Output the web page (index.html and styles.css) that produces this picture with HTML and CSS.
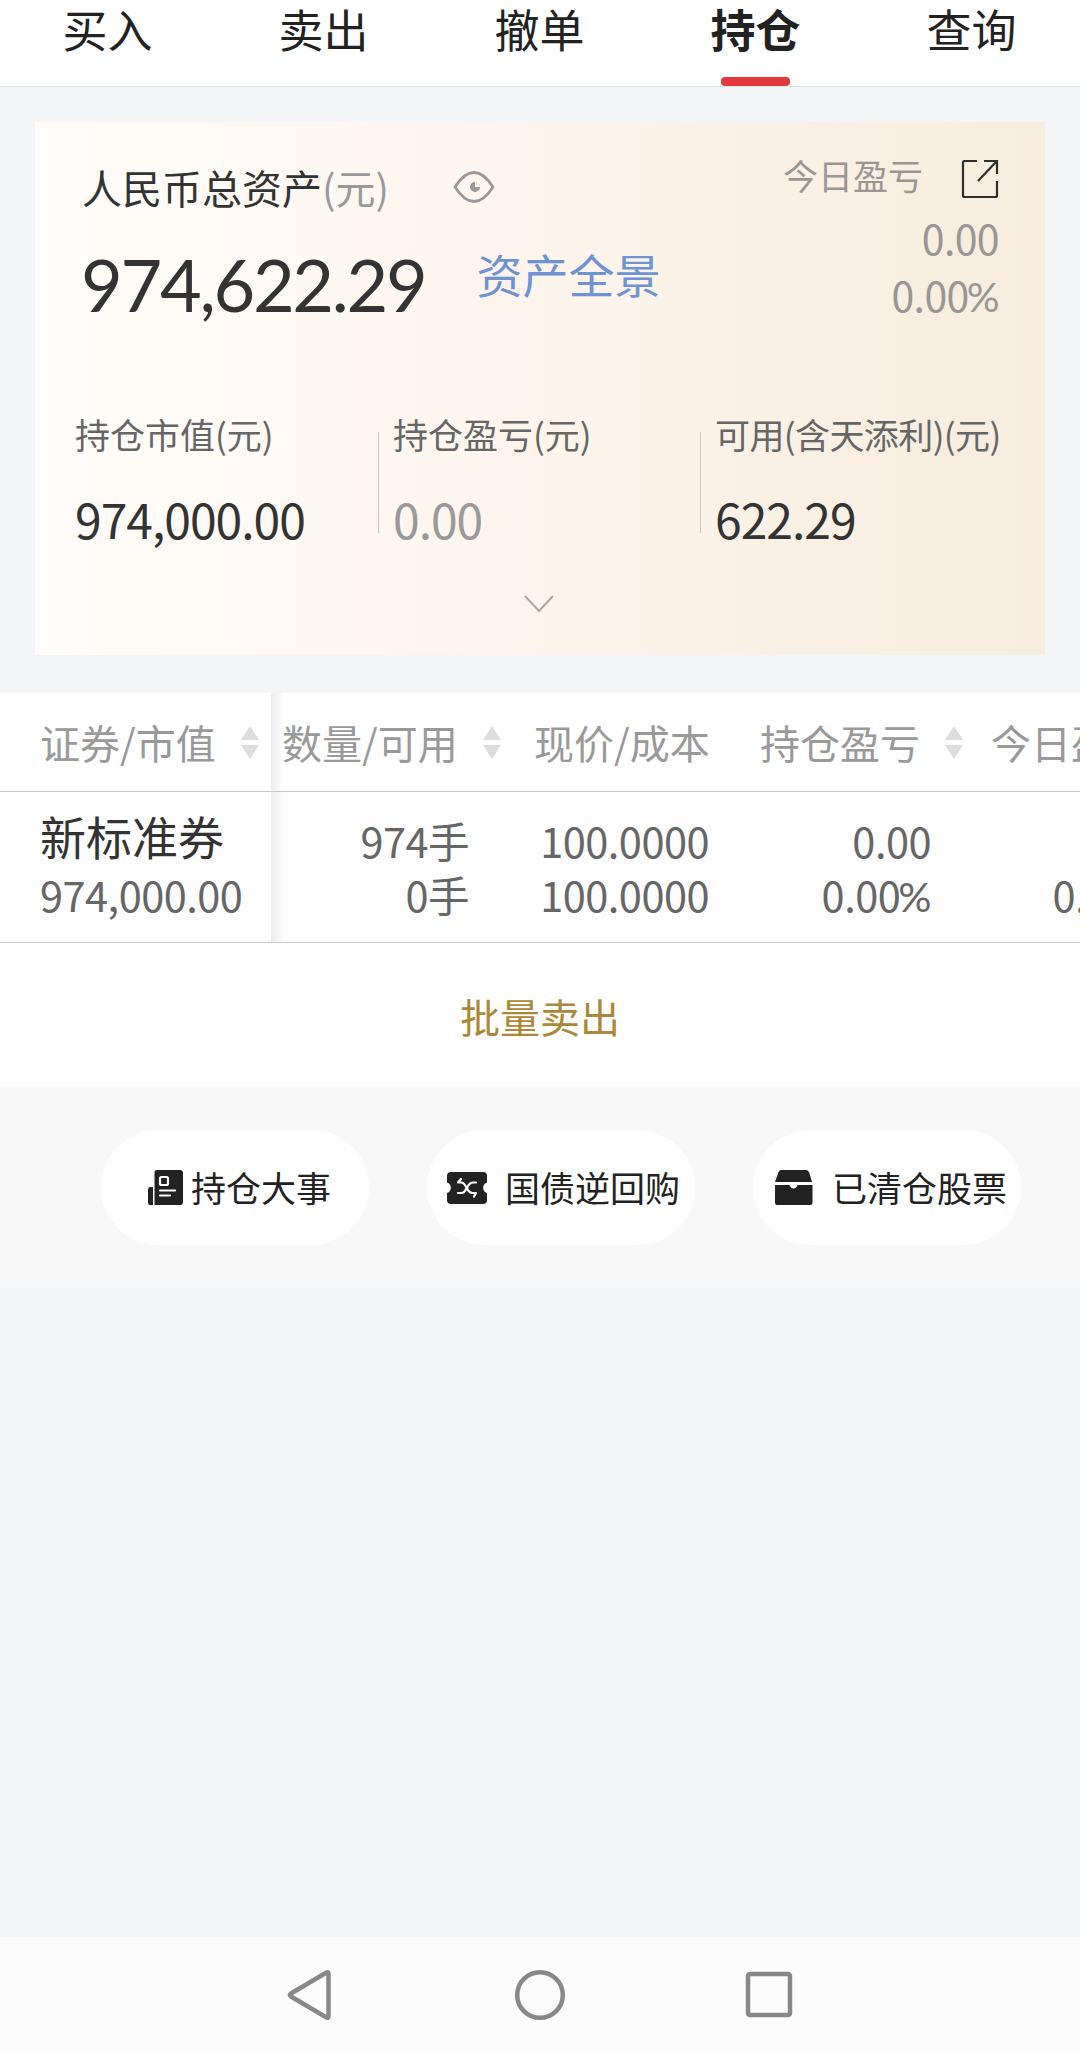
FILE: index.html
```html
<!DOCTYPE html>
<html lang="zh-CN">
  <head>
    <meta charset="UTF-8" />
    <meta name="viewport" content="width=device-width, initial-scale=1.0" />
    <title>持仓</title>
    <link rel="stylesheet" href="styles.css">
  </head>
  <body>
    <nav class="tabs">
      <a class="tab">买入</a>
      <a class="tab">卖出</a>
      <a class="tab">撤单</a>
      <a class="tab active">持仓</a>
      <a class="tab">查询</a>
    </nav>

    <section class="card">
      <div class="card-top">
        <div class="total">
          <div class="total-label">
            <span>人民币总资产<em>(元)</em></span>
            <svg class="eye" width="42" height="34" viewBox="0 0 42 34" fill="none">
              <path d="M2 17C9 6 15 2.500 21 2.500S33 6 40 17C33 28 27 31.500 21 31.500S9 28 2 17Z" stroke="#999" stroke-width="2.800" stroke-linejoin="round" />
              <path d="M22 12V17H27A5 5 0 1 1 22 12Z" fill="#999" />
            </svg>
          </div>
          <div class="total-row">
            <span class="total-value">974,622.29</span>
            <a class="panorama">资产全景</a>
          </div>
        </div>
        <div class="today">
          <div class="today-label">
            <span>今日盈亏</span>
            <svg width="38" height="40" viewBox="0 0 38 40" fill="none" stroke="#2e2e2a" stroke-width="2.200">
              <path d="M16 2H3.500Q2 2 2 3.500V36.500Q2 38 3.500 38H34.500Q36 38 36 36.500V22" />
              <path d="M23 2H36V15M36 2L17 22" />
            </svg>
          </div>
          <div class="today-value">0.00</div>
          <div class="today-value">0.00<span class="pct">%</span></div>
        </div>
      </div>

      <div class="stats">
        <div class="stat">
          <div class="stat-label">持仓市值(元)</div>
          <div class="stat-value">974,000.00</div>
        </div>
        <div class="stat">
          <div class="stat-label">持仓盈亏(元)</div>
          <div class="stat-value gray">0.00</div>
        </div>
        <div class="stat usable">
          <div class="stat-label">可用(含天添利)(元)</div>
          <div class="stat-value">622.29</div>
        </div>
      </div>

      <svg class="chevron" width="32" height="20" viewBox="0 0 32 20" fill="none">
        <path d="M2 2L16 17L30 2" stroke="#aaa7a3" stroke-width="2" />
      </svg>
    </section>

    <section class="holdings">
      <div class="row head">
        <div class="col name">证券/市值<i class="sort"></i></div>
        <div class="col qty">数量/可用<i class="sort"></i></div>
        <div class="col price">现价/成本</div>
        <div class="col profit">持仓盈亏<i class="sort"></i></div>
        <div class="col day">今日盈亏</div>
      </div>
      <div class="row body">
        <div class="col name">
          <div class="stock">新标准券</div>
          <div>974,000.00</div>
        </div>
        <div class="col qty">
          <div>974手</div>
          <div>0手</div>
        </div>
        <div class="col price">
          <div>100.0000</div>
          <div>100.0000</div>
        </div>
        <div class="col profit">
          <div>0.00</div>
          <div>0.00<span class="pct">%</span></div>
        </div>
        <div class="col day">
          <div>0.00</div>
          <div>0.00<span class="pct">%</span></div>
        </div>
      </div>
      <a class="batch">批量卖出</a>
    </section>

    <section class="shortcuts">
      <a class="pill news">
        <svg width="38" height="38" viewBox="0 0 38 38">
          <path d="M10 1H33Q36 1 36 4V33Q36 36 33 36H7.500V3.500Q7.500 1 10 1Z" fill="#222" />
          <path d="M3 18H6V36H3Q1 36 1 33.500V20.500Q1 18 3 18Z" fill="#222" />
          <g fill="none" stroke="#fff" stroke-width="2.200" stroke-linecap="round">
            <rect x="13" y="8" width="8" height="8" rx="1.500" />
            <path d="M13 21.500H28M13 26.500H23" />
          </g>
        </svg>
        <span>持仓大事</span>
      </a>
      <a class="pill repo">
        <svg width="42" height="34" viewBox="0 0 42 34">
          <path d="M5 1H37Q41 1 41 5V11.500A5.500 5.500 0 0 0 41 22V29Q41 33 37 33H5Q1 33 1 29V22A5.500 5.500 0 0 0 1 11.500V5Q1 1 5 1Z" fill="#222" />
          <path d="M15 8L12 11.500H15.500Q18.500 12 20.500 17Q18.500 22 15.500 22H12M30 11.500H26.500Q23 12 21 17Q23 22 26.500 22H30L28 25.500" fill="none" stroke="#fff" stroke-width="2.200" stroke-linecap="round" stroke-linejoin="round" />
        </svg>
        <span>国债逆回购</span>
      </a>
      <a class="pill cleared">
        <svg width="40" height="38" viewBox="0 0 40 38" fill="#222">
          <path d="M7 1H32Q34.500 1 35.200 3.500L38 13H1L4.500 3Q5.200 1 7 1Z" />
          <path d="M1 16H15.500A4.200 5 0 0 0 23.500 16H38.500V33.500Q38.500 36 36 36H3.500Q1 36 1 33.500Z" />
        </svg>
        <span>已清仓股票</span>
      </a>
    </section>

    <footer class="sysbar">
      <svg width="50" height="54" viewBox="0 0 50 54">
        <path d="M41.500 4.500Q43.500 3.500 43.500 6V48Q43.500 50.500 41.500 49.500L6 28.500Q3.800 27 6 25.500Z" />
      </svg>
      <svg width="54" height="54" viewBox="0 0 54 54">
        <circle cx="27" cy="27" r="22.800" />
      </svg>
      <svg width="50" height="54" viewBox="0 0 50 54">
        <rect x="4" y="6" width="42" height="41" rx="2" />
      </svg>
    </footer>
  </body>
</html>
```
FILE: styles.css
```css
* {
  box-sizing: border-box;
}

body {
  margin: 0;
  height: 2052px;
  display: flex;
  flex-direction: column;
  overflow: hidden;
  background-color: #f4f5f7;
  color: #222;
  font-family: 'Noto Sans CJK SC', sans-serif;
  white-space: nowrap;
}

svg {
  display: block;
  flex: none;
}

em,
i {
  font-style: normal;
}

.pct {
  margin-left: -2px;
  font-family: Lato, sans-serif;
  line-height: 1;
}

/* tabs */
.tabs {
  display: flex;
  height: 87px;
  background-color: #fff;
  border-bottom: 1px solid #e0e3e6;
}

.tab {
  width: 216px;
  display: flex;
  flex-direction: column;
  align-items: center;
  padding-right: 1px;
  font-size: 45px;
  line-height: 58px;
}

.tab.active {
  font-weight: bold;
}

.tab.active::after {
  content: '';
  width: 69px;
  height: 9px;
  margin-top: 19px;
  border-radius: 4px;
  background-color: #e4393c;
}

/* asset card */
.card {
  height: 533px;
  margin: 35px 35px 38px;
  background: linear-gradient(to right, #fffdfa, #fdf5ed 46%, #f7eddd);
}

.card-top {
  display: flex;
  justify-content: space-between;
  height: 290px;
  padding: 0 46px 0 47px;
}

.total-label {
  display: flex;
  align-items: center;
  gap: 64px;
  height: 60px;
  margin-top: 35px;
  font-size: 40px;
  color: #333;
}

.total-label span {
  padding-bottom: 1px;
}

.total-label em {
  color: #999;
}

.total-row {
  display: flex;
  align-items: center;
  height: 104px;
  margin-top: 15px;
  gap: 51px;
}

.total-value {
  margin-left: -1px;
  font-family: Lato, sans-serif;
  font-size: 72px;
  letter-spacing: -2.300px;
  color: #333;
}

.panorama {
  padding-bottom: 22px;
  font-size: 46px;
  color: #6d93d3;
}

.today {
  padding-top: 27px;
  text-align: right;
  color: #999693;
}

.today-label {
  display: flex;
  align-items: center;
  gap: 38px;
  height: 60px;
  font-size: 35px;
}

.today-label span {
  padding-bottom: 10px;
}

.today-value {
  font-size: 41px;
  line-height: 57px;
  letter-spacing: -0.600px;
}

.stats {
  display: flex;
  height: 180px;
  padding-left: 40px;
}

.stat {
  position: relative;
  width: 318px;
}

.stat + .stat {
  width: 322px;
}

.stat + .stat::before {
  content: '';
  position: absolute;
  left: -15px;
  top: 20px;
  width: 1px;
  height: 101px;
  background-color: #ccc9c5;
}

.stat-label {
  font-size: 35px;
  line-height: 44px;
  color: #666;
}

.usable .stat-label {
  letter-spacing: -0.600px;
}

.stat-value {
  margin-top: 34px;
  font-size: 48px;
  line-height: 56px;
  letter-spacing: -1px;
  color: #333;
}

.stat-value.gray {
  color: #999;
}

.chevron {
  margin: 2px auto 0 488px;
}

/* holdings table */
.holdings {
  height: 394px;
  background-color: #fff;
  overflow: hidden;
}

.row {
  display: flex;
  width: 1210px;
  border-bottom: 1px solid #c8c8c8;
}

.col {
  flex: none;
}

.head {
  height: 99px;
  font-size: 40px;
  color: #999;
}

.head .col {
  display: flex;
  align-items: center;
}

.body {
  height: 151px;
  background-color: #fdfdfd;
  font-size: 41.500px;
  line-height: 54px;
  letter-spacing: -0.500px;
  color: #666;
}

.body .col {
  padding-top: 21px;
  text-align: right;
}

.row .name {
  width: 271px;
  padding-left: 40px;
  text-align: left;
}

.stock {
  height: 54px;
  font-size: 46px;
  line-height: 44px;
  letter-spacing: 0;
  color: #333;
}

.row .qty {
  width: 198px;
  padding-left: 11px;
  background: linear-gradient(to right, #ececec, rgba(255, 255, 255, 0) 13px);
}

.row .price {
  width: 240px;
}

.head .price {
  padding-left: 65px;
}

.row .profit {
  width: 222px;
}

.head .profit {
  padding-left: 51px;
}

.row .day {
  width: 231px;
}

.head .day {
  padding-left: 60px;
}

.sort {
  display: flex;
  flex-direction: column;
  flex: none;
  gap: 5px;
  margin-left: 25px;
}

.sort::before,
.sort::after {
  content: '';
  border: 9px solid transparent;
  border-top: 0;
  border-bottom: 14px solid #ddd;
}

.sort::after {
  border-bottom: 0;
  border-top: 14px solid #ddd;
}

.batch {
  display: block;
  font-size: 40px;
  line-height: 146px;
  text-align: center;
  color: #ab8838;
}

/* shortcuts */
.shortcuts {
  display: flex;
  gap: 58px;
  height: 201px;
  padding: 43px 0 0 101px;
  background-color: #f8f8f8;
}

.pill {
  display: flex;
  align-items: center;
  width: 268px;
  height: 115px;
  border-radius: 58px;
  background-color: #fff;
  font-size: 35px;
}

.pill svg {
  margin-top: 1px;
}

.pill span {
  padding-bottom: 2px;
}

.news {
  padding-left: 46px;
  gap: 6px;
}

.repo {
  padding-left: 19px;
  gap: 17px;
}

.cleared {
  padding-left: 21px;
  gap: 18px;
}

/* system navigation bar */
.sysbar {
  display: flex;
  justify-content: space-between;
  align-items: center;
  height: 115px;
  margin-top: auto;
  padding: 0 286px 0 285px;
  background-color: #fcfcfc;
}

.sysbar svg {
  fill: none;
  stroke: #888;
  stroke-width: 4.500px;
}
```
